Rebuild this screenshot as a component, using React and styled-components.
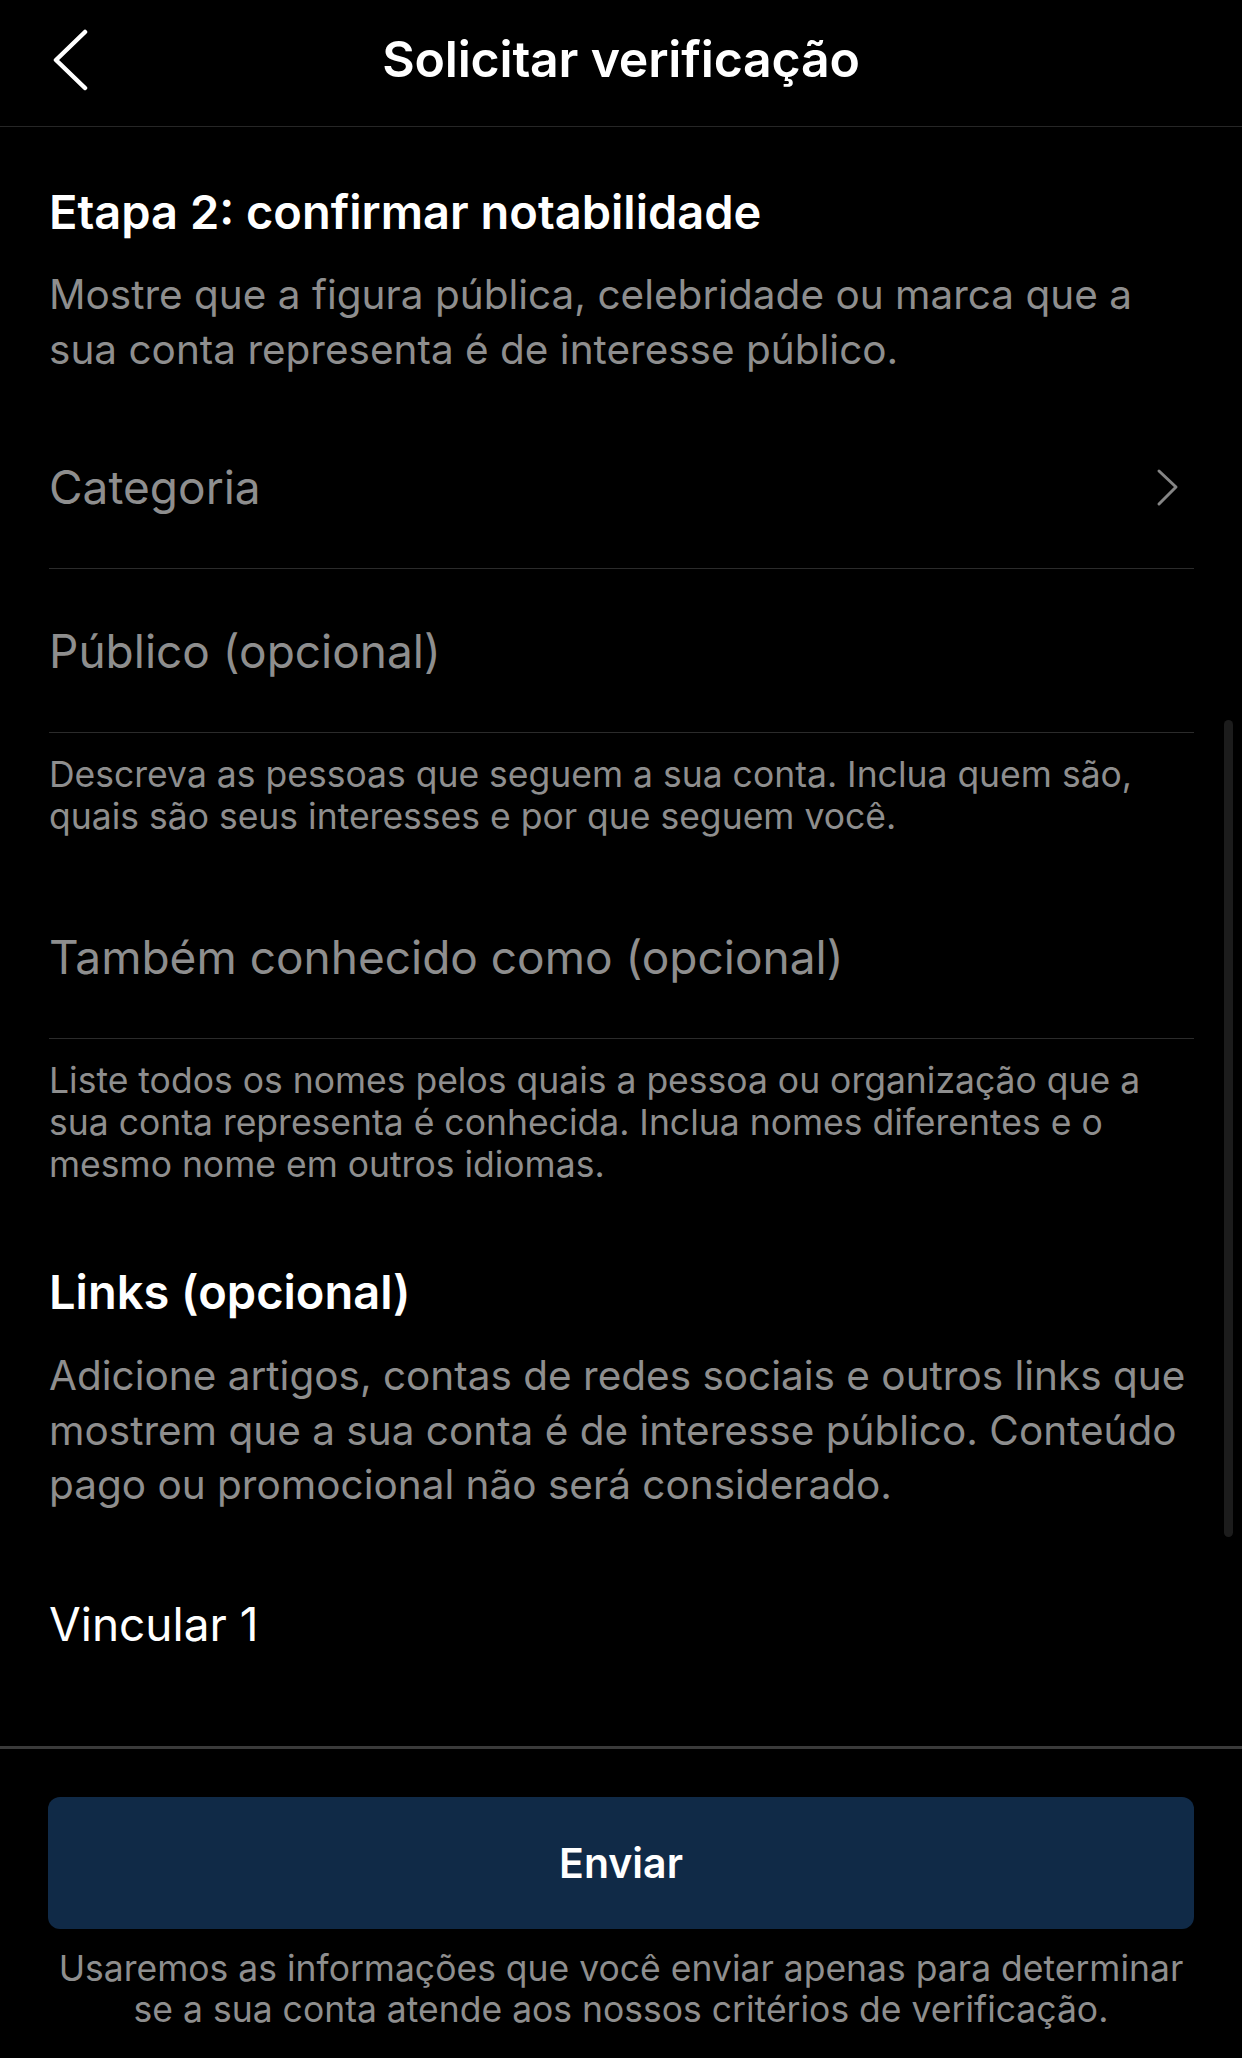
import React from "react";
import styled, { createGlobalStyle } from "styled-components";

const GlobalStyle = createGlobalStyle`
  html, body { margin: 0; padding: 0; background: #000; }
  body { font-family: Inter, "Noto Sans", "Liberation Sans", sans-serif; -webkit-font-smoothing: antialiased; }
  * { box-sizing: border-box; }
`;

const Screen = styled.div`
  width: 1242px;
  height: 2058px;
  display: flex;
  flex-direction: column;
  background: #000;
  color: #fff;
  overflow: hidden;
`;

const Header = styled.header`
  height: 127px;
  flex-shrink: 0;
  display: grid;
  grid-template-columns: 1fr auto 1fr;
  align-items: center;
  padding: 0 52px;
  border-bottom: 1px solid #262626;
`;

const BackButton = styled.button`
  justify-self: start;
  display: flex;
  padding: 0;
  border: 0;
  background: none;
  color: #fff;
  margin-top: -4px;
`;

const Title = styled.h1`
  margin: 0;
  font-size: 50px;
  font-weight: 600;
  letter-spacing: -0.2px;
  margin-top: -8px;
`;

const Scroll = styled.main`
  position: relative;
  flex: 1;
  overflow: hidden;
  padding: 59px 48px 0 49px;
`;

const ScrollThumb = styled.div`
  position: absolute;
  top: 593px;
  right: 9px;
  width: 9px;
  height: 817px;
  border-radius: 5px;
  background: #1c1c1c;
`;

const SectionTitle = styled.h2`
  margin: ${(p) => p.$top || 0}px 0 0;
  font-size: 47px;
  line-height: 52px;
  font-weight: 600;
  color: #fff;
`;

const Lead = styled.p`
  margin: ${(p) => p.$top || 0}px 0 0;
  font-size: 40.5px;
  line-height: 54.5px;
  color: #8e8e8e;
  white-space: pre;
`;

const FieldRow = styled.div`
  margin-top: ${(p) => p.$top || 0}px;
  height: 164px;
  display: flex;
  align-items: center;
  justify-content: space-between;
  border-bottom: 1px solid #2b2b2b;
`;

const Placeholder = styled.span`
  font-size: 46px;
  color: #8e8e8e;
`;

const Hint = styled.p`
  margin: 21px 0 0;
  font-size: 35.5px;
  line-height: 42px;
  color: #8e8e8e;
  white-space: pre;
`;

const LinkLabel = styled.div`
  margin-top: ${(p) => p.$top || 0}px;
  font-size: 46px;
  line-height: 52px;
  color: #fff;
`;

const Footer = styled.footer`
  flex-shrink: 0;
  border-top: 3px solid #3a3a3a;
  padding: 48px 48px 28px;
  display: flex;
  flex-direction: column;
  align-items: center;
`;

const SubmitButton = styled.button`
  width: 100%;
  height: 132px;
  border: 0;
  border-radius: 12px;
  background: #102a47;
  color: #fff;
  font-family: inherit;
  font-size: 41px;
  font-weight: 600;
`;

const Disclaimer = styled.p`
  margin: 19px 0 0;
  font-size: 35.5px;
  line-height: 41px;
  color: #8e8e8e;
  text-align: center;
  white-space: pre;
`;

const BackIcon = () => (
  <svg width="38" height="64" viewBox="0 0 38 64" fill="none">
    <polyline points="33,3 4,31 33,59" stroke="#fff" strokeWidth="4.5" strokeLinecap="round" strokeLinejoin="round" />
  </svg>
);

const ChevronRight = () => (
  <svg width="24" height="40" viewBox="0 0 24 40" fill="none" style={{ marginRight: 14 }}>
    <polyline points="3,4 20,20 3,37" stroke="#858585" strokeWidth="3" strokeLinecap="round" strokeLinejoin="round" />
  </svg>
);

export default function App() {
  return (
    <Screen>
      <GlobalStyle />
      <Header>
        <BackButton aria-label="Voltar"><BackIcon /></BackButton>
        <Title>Solicitar verificação</Title>
        <span />
      </Header>

      <Scroll>
        <SectionTitle>Etapa 2: confirmar notabilidade</SectionTitle>
        <Lead $top={30}>
          {"Mostre que a figura pública, celebridade ou marca que a\nsua conta representa é de interesse público."}
        </Lead>

        <FieldRow $top={28}>
          <Placeholder>Categoria</Placeholder>
          <ChevronRight />
        </FieldRow>

        <FieldRow>
          <Placeholder>Público (opcional)</Placeholder>
        </FieldRow>
        <Hint>
          {"Descreva as pessoas que seguem a sua conta. Inclua quem são,\nquais são seus interesses e por que seguem você."}
        </Hint>

        <FieldRow $top={37}>
          <Placeholder>Também conhecido como (opcional)</Placeholder>
        </FieldRow>
        <Hint>
          {"Liste todos os nomes pelos quais a pessoa ou organização que a\nsua conta representa é conhecida. Inclua nomes diferentes e o\nmesmo nome em outros idiomas."}
        </Hint>

        <SectionTitle $top={80}>Links (opcional)</SectionTitle>
        <Lead $top={31}>
          {"Adicione artigos, contas de redes sociais e outros links que\nmostrem que a sua conta é de interesse público. Conteúdo\npago ou promocional não será considerado."}
        </Lead>

        <LinkLabel $top={85}>Vincular 1</LinkLabel>

        <ScrollThumb />
      </Scroll>

      <Footer>
        <SubmitButton>Enviar</SubmitButton>
        <Disclaimer>
          {"Usaremos as informações que você enviar apenas para determinar\nse a sua conta atende aos nossos critérios de verificação."}
        </Disclaimer>
      </Footer>
    </Screen>
  );
}
